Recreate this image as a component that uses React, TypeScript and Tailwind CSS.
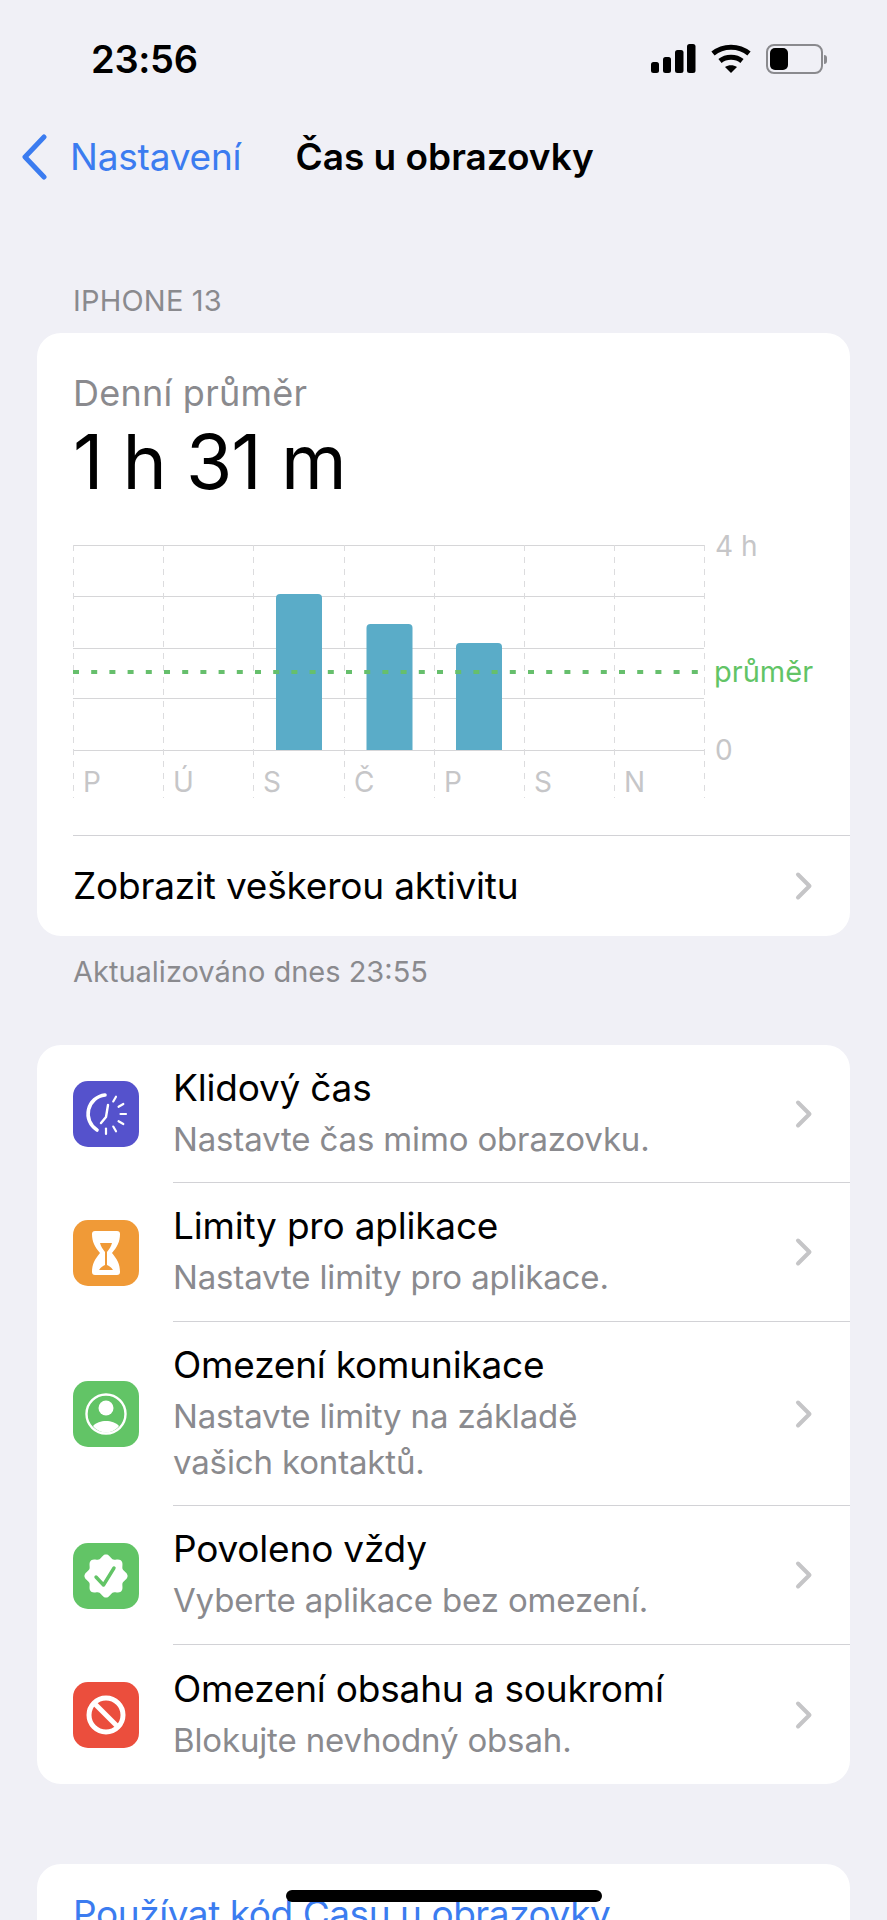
import React from "react";

const DAYS = ["P", "Ú", "S", "Č", "P", "S", "N"];
const GRID_Y = [15, 66, 118, 168, 220];
const COL_X = [0, 90, 180, 271, 361, 451, 541, 631];
const BARS = [
  { x: 203, top: 64 },
  { x: 293.5, top: 94 },
  { x: 383, top: 113 },
];

function Chevron() {
  return (
    <svg width="20" height="32" viewBox="0 0 20 32" fill="none" className="shrink-0">
      <path d="M4 4.500l11.500 11.500L4 27.500" stroke="#c5c5c7" strokeWidth="4" strokeLinecap="round" strokeLinejoin="round" />
    </svg>
  );
}

function IconBox({ color, children }: { color: string; children: React.ReactNode }) {
  return (
    <div className={`w-[66px] h-[66px] rounded-[15px] shrink-0 ${color}`}>
      <svg width="66" height="66" viewBox="0 0 66 66" fill="none">
        {children}
      </svg>
    </div>
  );
}

function ClockIcon() {
  const ticks = [-60, -30, 0, 30, 60, 90];
  return (
    <>
      <path d="M32 14A19 19 0 0 0 24 49" stroke="#fff" strokeWidth="3.6" strokeLinecap="round" />
      <path d="M35 24l-2 12-5 6" stroke="#fff" strokeWidth="2.4" strokeLinecap="round" strokeLinejoin="round" />
      {ticks.map((a) => {
        const r = (a * Math.PI) / 180;
        return (
          <line
            key={a}
            x1={33 + 14.5 * Math.cos(r)}
            y1={33 + 14.5 * Math.sin(r)}
            x2={33 + 20 * Math.cos(r)}
            y2={33 + 20 * Math.sin(r)}
            stroke="#fff"
            strokeWidth="2.2"
            strokeLinecap="round"
          />
        );
      })}
    </>
  );
}

function HourglassIcon() {
  return (
    <>
      <path
        d="M22 11h22a3 3 0 0 1 3 3c0 8-3 13-8 19 5 6 8 11 8 19a3 3 0 0 1-3 3H22a3 3 0 0 1-3-3c0-8 3-13 8-19-5-6-8-11-8-19a3 3 0 0 1 3-3z"
        fill="#fff"
      />
      <path d="M27 23h12c-1 4-3 6-5 9v13c2 1 4 2 6 5H26c2-3 4-4 6-5V32c-2-3-4-5-5-9z" fill="#f09a37" />
    </>
  );
}

function ContactIcon() {
  return (
    <>
      <circle cx="33" cy="33" r="19.5" stroke="#fff" strokeWidth="2.4" />
      <circle cx="33" cy="27" r="7.5" fill="#fff" />
      <path d="M20 45c3-3.5 8-5 13-5s10 1.500 13 5c-3 4-8 6.500-13 6.500S23 49 20 45z" fill="#fff" />
    </>
  );
}

function BadgeIcon() {
  const pts: string[] = [];
  for (let i = 0; i < 120; i++) {
    const t = (i / 120) * Math.PI * 2;
    const r = 19.8 + 1.8 * Math.cos(t * 8);
    pts.push(`${(33 + r * Math.sin(t)).toFixed(2)},${(33 - r * Math.cos(t)).toFixed(2)}`);
  }
  return (
    <>
      <polygon points={pts.join(" ")} fill="#fff" />
      <path d="M23 34l7.500 8L41 25" stroke="#62c466" strokeWidth="3.4" strokeLinecap="round" strokeLinejoin="round" />
    </>
  );
}

function NoIcon() {
  return (
    <>
      <circle cx="33" cy="33" r="17" stroke="#fff" strokeWidth="5" />
      <line x1="21" y1="21" x2="45" y2="45" stroke="#fff" strokeWidth="5" />
    </>
  );
}

function Row({
  icon,
  title,
  sub,
  height,
  last,
}: {
  icon: React.ReactNode;
  title: string;
  sub: React.ReactNode;
  height: string;
  last?: boolean;
}) {
  return (
    <div className={`flex items-center pl-[36px] ${height}`}>
      {icon}
      <div
        className={`ml-[34px] flex-1 h-full flex items-center justify-between pr-[36px] ${
          last ? "" : "border-b border-[#d2d2d6]"
        }`}
      >
        <div className="flex flex-col pb-[6px]">
          <span className="text-[37px] leading-[56px] tracking-[-0.2px] text-black">{title}</span>
          <span className="text-[33px] leading-[46px] tracking-[-0.15px] text-[#8a8a8e]">{sub}</span>
        </div>
        <Chevron />
      </div>
    </div>
  );
}

function Chart() {
  return (
    <svg width="777" height="270" viewBox="0 0 777 270" className="block">
      {GRID_Y.map((y) => (
        <line key={y} x1="0" x2="631" y1={y + 0.5} y2={y + 0.5} stroke="#d6d6d8" strokeWidth="1" />
      ))}
      {COL_X.map((x) => (
        <line key={x} x1={x + 0.5} x2={x + 0.5} y1="15" y2="268" stroke="#dcdcde" strokeWidth="1" strokeDasharray="6 6" />
      ))}
      {BARS.map((b) => (
        <path
          key={b.x}
          d={`M${b.x} 220V${b.top + 4}a4 4 0 0 1 4-4h38a4 4 0 0 1 4 4V220z`}
          fill="#5aacc8"
        />
      ))}
      <line x1="0" x2="626" y1="142" y2="142" stroke="#66bf6c" strokeWidth="4" strokeDasharray="6 12.200" />
      {DAYS.map((d, i) => (
        <text key={i} x={COL_X[i] + 10} y="262" fontSize="28" fill="#c6c6c8" className="font-['Inter']">
          {d}
        </text>
      ))}
      <text x="642" y="26" fontSize="28" fill="#c6c6c8" className="font-['Inter']">
        4 h
      </text>
      <text x="641" y="152" fontSize="29" fill="#62c466" className="font-['Inter']">
        průměr
      </text>
      <text x="642" y="230" fontSize="28" fill="#c6c6c8" className="font-['Inter']">
        0
      </text>
    </svg>
  );
}

export default function App() {
  return (
    <div className="relative w-[887px] h-[1920px] overflow-hidden bg-[#f0f0f6] font-['Inter',sans-serif]">
      {/* STATUS BAR */}
      <div className="flex items-center justify-between h-[118px] pl-[91px] pr-[60px]">
        <span className="text-[38px] font-semibold text-black tracking-[-0.3px]">23:56</span>
        <div className="flex items-center gap-[15px]">
          <svg width="45" height="30" viewBox="0 0 45 30" fill="#000">
            <rect x="0" y="18" width="8" height="11" rx="2.500" />
            <rect x="12" y="13" width="8" height="16" rx="2.500" />
            <rect x="24" y="6" width="8.500" height="23" rx="2.500" />
            <rect x="36" y="0" width="8.500" height="29" rx="2.500" />
          </svg>
          <svg width="40" height="30" viewBox="0 0 40 30" fill="none" stroke="#000" strokeWidth="5">
            <path d="M2 9.500c10-8.500 26-8.500 36 0" />
            <path d="M9 17c6-5 16-5 22 0" />
            <path d="M20 29l-6-6c3.500-2.500 8.500-2.500 12 0z" fill="#000" stroke="none" />
          </svg>
          <div className="flex items-center gap-[1px]">
            <div className="w-[57px] h-[30px] rounded-[8px] border-2 border-[#8a8a8e] p-[2px]">
              <div className="w-[18px] h-full rounded-[5px] bg-black" />
            </div>
            <div className="w-[3px] h-[9px] rounded-r-[3px] bg-[#8a8a8e]" />
          </div>
        </div>
      </div>

      {/* NAV */}
      <div className="flex items-center h-[77px] pl-[21px]">
        <svg width="27" height="46" viewBox="0 0 27 46" fill="none">
          <path d="M23 3L4 23l19 20" stroke="#3b7cf0" strokeWidth="5" strokeLinecap="round" strokeLinejoin="round" />
        </svg>
        <span className="ml-[22px] text-[37px] text-[#3b7cf0] tracking-[-0.2px]">Nastavení</span>
        <span className="ml-[54px] text-[37px] font-semibold text-black">Čas u obrazovky</span>
      </div>

      {/* HEADER */}
      <div className="pl-[73px] mt-[86px] h-[40px] text-[29px] leading-[40px] tracking-[0.2px] text-[#8a8a8e]">IPHONE 13</div>

      {/* DAILY AVERAGE CARD */}
      <div className="mx-[37px] mt-[12px] w-[813px] h-[603px] rounded-[24px] bg-white">
        <div className="pl-[36px] pt-[37px]">
          <p className="text-[36px] leading-[46px] tracking-[0.25px] text-[#8a8a8e]">Denní průměr</p>
          <p className="text-[75px] leading-[91px] text-black tracking-[-1px]">1 h 31 m</p>
        </div>
        <div className="pl-[36px] mt-[23px]">
          <Chart />
        </div>
        <div className="ml-[36px] border-t border-[#d2d2d6] mt-[35px] h-[101px] flex items-center justify-between pr-[36px]">
          <span className="text-[37px] tracking-[-0.2px] text-black">Zobrazit veškerou aktivitu</span>
          <Chevron />
        </div>
      </div>
      <div className="pl-[73px] mt-[16px] text-[29px] leading-[40px] text-[#8a8a8e]">Aktualizováno dnes 23:55</div>

      {/* OPTIONS CARD */}
      <div className="mx-[37px] mt-[53px] w-[813px] rounded-[24px] bg-white overflow-hidden">
        <Row
          height="h-[138px]"
          icon={<IconBox color="bg-[#5552cc]"><ClockIcon /></IconBox>}
          title="Klidový čas"
          sub="Nastavte čas mimo obrazovku."
        />
        <Row
          height="h-[139px]"
          icon={<IconBox color="bg-[#f09a37]"><HourglassIcon /></IconBox>}
          title="Limity pro aplikace"
          sub="Nastavte limity pro aplikace."
        />
        <Row
          height="h-[184px]"
          icon={<IconBox color="bg-[#62c466]"><ContactIcon /></IconBox>}
          title="Omezení komunikace"
          sub={
            <>
              Nastavte limity na základě
              <br />
              vašich kontaktů.
            </>
          }
        />
        <Row
          height="h-[139px]"
          icon={<IconBox color="bg-[#62c466]"><BadgeIcon /></IconBox>}
          title="Povoleno vždy"
          sub="Vyberte aplikace bez omezení."
        />
        <Row
          height="h-[139px]"
          last
          icon={<IconBox color="bg-[#eb4e3d]"><NoIcon /></IconBox>}
          title="Omezení obsahu a soukromí"
          sub="Blokujte nevhodný obsah."
        />
      </div>

      {/* PASSCODE CARD */}
      <div className="mx-[37px] mt-[80px] w-[813px] h-[120px] rounded-[24px] bg-white pl-[36px] pt-[22px]">
        <span className="text-[37px] tracking-[-0.45px] text-[#3b7cf0]">Používat kód Času u obrazovky</span>
      </div>

      {/* HOME INDICATOR */}
      <div className="absolute left-[286px] top-[1890px] w-[316px] h-[12px] rounded-full bg-black" />
    </div>
  );
}
